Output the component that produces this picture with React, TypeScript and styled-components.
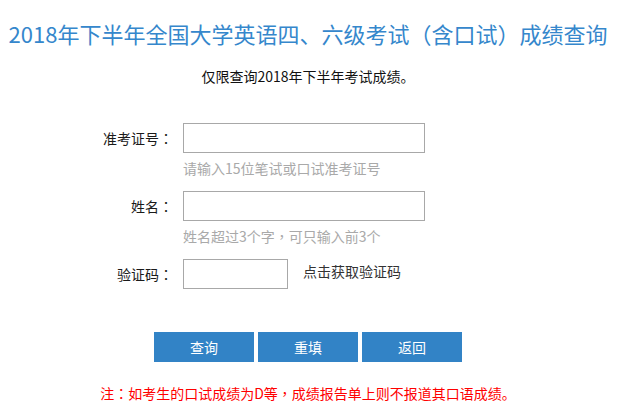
import React from "react";
import styled, { createGlobalStyle } from "styled-components";

const GlobalStyle = createGlobalStyle`
  html, body {
    margin: 0;
    padding: 0;
    background: #ffffff;
  }
  body {
    font-family: "Noto Sans CJK SC", "Noto Sans", sans-serif;
    color: #222222;
  }
  * { box-sizing: border-box; }
`;

const Page = styled.div`
  width: 616px;
  display: flex;
  flex-direction: column;
  align-items: center;
  padding-top: 16px;
`;

const Title = styled.h1`
  margin: 0;
  font-size: 22px;
  font-weight: 400;
  line-height: 34px;
  color: #3587cc;
  white-space: nowrap;
`;

const Subtitle = styled.p`
  margin: 16px 0 0;
  font-size: 14px;
  line-height: 20px;
  color: #111111;
`;

const Punct = styled.span`
  font-family: "Noto Sans CJK TC", "Noto Sans CJK SC", sans-serif;
`;

const Form = styled.form`
  align-self: stretch;
  margin-top: 37px;
  display: grid;
  grid-template-columns: 173px 1fr;
  column-gap: 10px;
  row-gap: 13px;
`;

const Label = styled.label`
  text-align: right;
  font-size: 14px;
  line-height: 30px;
  color: #1a1a1a;
  white-space: nowrap;
`;

const Field = styled.div`
  display: flex;
  flex-direction: column;
  align-items: flex-start;
`;

const FieldRow = styled.div`
  display: flex;
  align-items: flex-start;
  gap: 15px;
`;

const Input = styled.input<{ $w: number }>`
  width: ${(p) => p.$w}px;
  height: 30px;
  margin: 0;
  padding: 0 6px;
  border: 1px solid #a8a8a8;
  border-radius: 0;
  background: #ffffff;
  font-family: inherit;
  font-size: 14px;
  outline: none;
`;

const Hint = styled.div`
  margin-top: 5px;
  font-size: 14px;
  line-height: 20px;
  color: #a9a9a9;
  white-space: nowrap;
`;

const CaptchaLink = styled.span`
  font-size: 14px;
  line-height: 24px;
  color: #333333;
  cursor: pointer;
  white-space: nowrap;
`;

const Buttons = styled.div`
  margin-top: 43px;
  display: flex;
  gap: 4px;
`;

const Button = styled.button`
  width: 100px;
  height: 30px;
  margin: 0;
  padding: 0;
  border: none;
  background: #3283c6;
  color: #ffffff;
  font-family: inherit;
  font-size: 14px;
  line-height: 30px;
  cursor: pointer;
`;

const Note = styled.p`
  margin: 21px 0 0;
  font-size: 14px;
  line-height: 20px;
  color: #ff0000;
  white-space: nowrap;
`;

export default function App() {
  return (
    <>
      <GlobalStyle />
      <Page>
        <Title>2018年下半年全国大学英语四、六级考试（含口试）成绩查询</Title>
        <Subtitle>仅限查询2018年下半年考试成绩。</Subtitle>
        <Form onSubmit={(e) => e.preventDefault()}>
          <Label>
            准考证号<Punct>：</Punct>
          </Label>
          <Field>
            <Input $w={242} type="text" />
            <Hint>请输入15位笔试或口试准考证号</Hint>
          </Field>
          <Label>
            姓名<Punct>：</Punct>
          </Label>
          <Field>
            <Input $w={242} type="text" />
            <Hint>
              姓名超过3个字<Punct>，</Punct>可只输入前3个
            </Hint>
          </Field>
          <Label>
            验证码<Punct>：</Punct>
          </Label>
          <FieldRow>
            <Input $w={105} type="text" />
            <CaptchaLink>点击获取验证码</CaptchaLink>
          </FieldRow>
        </Form>
        <Buttons>
          <Button type="button">查询</Button>
          <Button type="button">重填</Button>
          <Button type="button">返回</Button>
        </Buttons>
        <Note>
          注<Punct>：</Punct>如考生的口试成绩为D等<Punct>，</Punct>成绩报告单上则不报道其口语成绩。
        </Note>
      </Page>
    </>
  );
}
